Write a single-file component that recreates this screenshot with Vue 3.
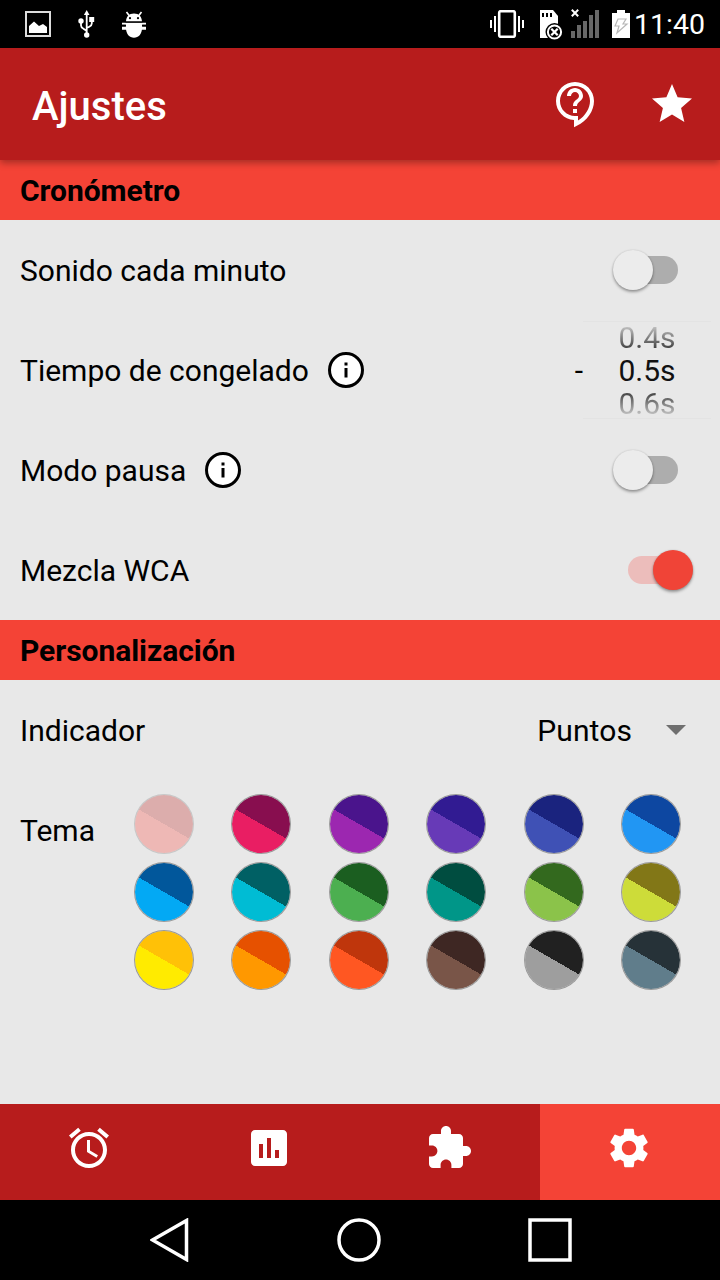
<script setup>
import { ref } from 'vue'

const minuteSound = ref(false)
const pauseMode = ref(false)
const wcaScramble = ref(true)
const activeTab = ref(3)

const themes = [
  ['#eeb8b5', '#dcadac'], ['#e91e63', '#880e4f'], ['#9c27b0', '#4a148c'],
  ['#673ab7', '#311b92'], ['#3f51b5', '#1a237e'], ['#2196f3', '#0d47a1'],
  ['#03a9f4', '#01579b'], ['#00bcd4', '#006064'], ['#4caf50', '#1b5e20'],
  ['#009688', '#004d40'], ['#8bc34a', '#33691e'], ['#cddc39', '#827717'],
  ['#ffeb00', '#ffc107'], ['#ff9800', '#e65100'], ['#ff5722', '#bf360c'],
  ['#795548', '#3e2723'], ['#9e9e9e', '#212121'], ['#607d8b', '#263238'],
]

const tabs = [
  'M22 5.72l-4.6-3.86-1.29 1.53 4.6 3.86L22 5.72zM7.88 3.39L6.6 1.86 2 5.71l1.29 1.53 4.59-3.85zM12.5 8H11v6l4.75 2.85.75-1.23-4-2.37V8zM12 4c-4.97 0-9 4.03-9 9s4.02 9 9 9c4.97 0 9-4.03 9-9s-4.03-9-9-9zm0 16c-3.87 0-7-3.13-7-7s3.13-7 7-7 7 3.13 7 7-3.13 7-7 7z',
  'M19 3H5c-1.1 0-2 .9-2 2v14c0 1.1.9 2 2 2h14c1.1 0 2-.9 2-2V5c0-1.1-.9-2-2-2zM9 17H7v-7h2v7zm4 0h-2V7h2v10zm4 0h-2v-4h2v4z',
  'M20.5 11H19V7c0-1.1-.9-2-2-2h-4V3.5C13 2.12 11.88 1 10.5 1S8 2.12 8 3.5V5H4c-1.1 0-1.99.9-1.99 2v3.8H3.5c1.49 0 2.7 1.21 2.7 2.7s-1.21 2.7-2.7 2.7H2V20c0 1.1.9 2 2 2h3.8v-1.5c0-1.49 1.21-2.7 2.7-2.7 1.49 0 2.7 1.21 2.7 2.7V22H17c1.1 0 2-.9 2-2v-4h1.5c1.38 0 2.5-1.12 2.5-2.5S21.88 11 20.5 11z',
  'M19.14 12.94c.04-.3.06-.61.06-.94 0-.32-.02-.64-.07-.94l2.03-1.58c.18-.14.23-.41.12-.61l-1.92-3.32c-.12-.22-.37-.29-.59-.22l-2.39.96c-.5-.38-1.03-.7-1.62-.94l-.36-2.54c-.04-.24-.24-.41-.48-.41h-3.84c-.24 0-.43.17-.47.41l-.36 2.54c-.59.24-1.13.57-1.62.94l-2.39-.96c-.22-.08-.47 0-.59.22L2.74 8.87c-.12.21-.08.47.12.61l2.03 1.58c-.05.3-.09.63-.09.94s.02.64.07.94l-2.03 1.58c-.18.14-.23.41-.12.61l1.92 3.32c.12.22.37.29.59.22l2.39-.96c.5.38 1.03.7 1.62.94l.36 2.54c.05.24.24.41.48.41h3.84c.24 0 .44-.17.47-.41l.36-2.54c.59-.24 1.13-.56 1.62-.94l2.39.96c.22.08.47 0 .59-.22l1.92-3.32c.12-.22.07-.47-.12-.61l-2.01-1.58zM12 15.6c-1.98 0-3.6-1.62-3.6-3.6s1.62-3.6 3.6-3.6 3.6 1.62 3.6 3.6-1.62 3.6-3.6 3.6z',
]
</script>

<template>
  <div class="screen">
    <div class="status">
      <div class="status-left">
        <!-- picture -->
        <svg width="26" height="26" viewBox="0 0 26 26">
          <rect x="1" y="1" width="24" height="24" fill="none" stroke="#ddd" stroke-width="2" />
          <path d="M4 22v-7l5-4.500 5 4.500 4-2 4 3v6z" fill="#fff" />
        </svg>
        <!-- usb -->
        <svg width="18" height="28" viewBox="0 0 18 28" fill="none" stroke="#fff" stroke-width="1.800">
          <path d="M8.700 4v21M3 12v3.500q0 2 2.500 3.200L8.700 21M13.800 10v3.500q0 2-2.500 3.200L8.700 18" />
          <g fill="#fff" stroke="none">
            <path d="M8.700 0l2.800 5H5.900z" />
            <circle cx="3" cy="11" r="2.700" />
            <path d="M11.200 7h5v5h-5z" />
            <circle cx="8.700" cy="25" r="2.700" />
          </g>
        </svg>
        <!-- debug robot -->
        <svg width="24" height="27" viewBox="0 0 24 27">
          <path d="M4.500 1l3 4M19.500 1l-3 4" stroke="#fff" stroke-width="1.600" />
          <path d="M4 10.500C4.300 5.500 7 2.500 12 2.500s7.700 3 8 8zM4 12.500h16V17c0 6-3.500 9.800-8 9.800S4 23 4 17z" fill="#fff" />
          <path d="M0 11.700h24v2H0zM0 15.500h24v3.200H0z" fill="#fff" />
          <path d="M3.500 10.500h17v1.100h-17zM0 13.700h3.700v1.800H0zM20.300 13.700H24v1.800h-3.700z" fill="#000" />
          <circle cx="8" cy="7.200" r="1.100" fill="#000" />
          <circle cx="16" cy="7.200" r="1.100" fill="#000" />
        </svg>
      </div>
      <div class="status-right">
        <!-- vibrate -->
        <svg class="vibrate" width="34" height="28" viewBox="0 0 34 28">
          <path d="M0 10h2v8H0zM4 6h2v16H4zM28 6h2v16h-2zM32 10h2v8h-2z" fill="#fff" />
          <rect x="9.200" y="1.200" width="15.600" height="25.600" rx="1.500" fill="none" stroke="#fff" stroke-width="2.600" />
        </svg>
        <!-- memory card removed -->
        <svg class="card" width="23" height="30" viewBox="0 0 23 30">
          <path d="M0 0h13l5 6v22H0z" fill="#fff" />
          <path d="M2 3h2v4H2zM6 3h2v4H6zM10 3h2v4h-2z" fill="#000" />
          <circle cx="14.500" cy="22" r="9" fill="#000" />
          <circle cx="14.500" cy="22" r="6.600" fill="#000" stroke="#fff" stroke-width="2" />
          <path d="M11.300 18.800l6.400 6.400M17.700 18.800l-6.400 6.400" stroke="#fff" stroke-width="2.300" />
        </svg>
        <!-- no signal -->
        <svg class="signal" width="29" height="30" viewBox="0 0 29 30">
          <path d="M.8.8l6.400 6.400M7.200.8L.8 7.200" stroke="#fff" stroke-width="2" />
          <path d="M0 22h4v7H0zM6 16h4v13H6zM12 12h4v17h-4zM18 6h4v23h-4zM24 1h4v28h-4z" fill="#686868" />
        </svg>
        <!-- charging battery -->
        <svg class="battery" width="18" height="28" viewBox="0 0 18 28">
          <path d="M5 0h8v3h5v25H0V3h5z" fill="#fff" />
          <path d="M6 9h8l-3 5h4L5 23l2-7H3z" fill="none" stroke="#b8b8b8" stroke-width="1.200" />
        </svg>
        <span class="time">11:40</span>
      </div>
    </div>

    <header class="toolbar">
      <h1>Ajustes</h1>
      <svg class="icon" viewBox="0 0 24 24">
        <path d="M11 23.590v-3.600c-5.010-.26-9-4.420-9-9.490C2 5.260 6.260 1 11.500 1S21 5.260 21 10.500c0 4.950-3.440 9.930-8.570 12.400l-1.430.69zM11.500 3C7.360 3 4 6.360 4 10.500S7.360 18 11.500 18H13v2.300c3.640-2.300 6-6.080 6-9.800C19 6.360 15.640 3 11.500 3zm-1 11.500h2v2h-2zm2-1.500h-2c0-3.250 3-3 3-5 0-1.100-.9-2-2-2s-2 .9-2 2h-2c0-2.210 1.790-4 4-4s4 1.790 4 4c0 2.500-3 2.750-3 5z" />
      </svg>
      <svg class="icon" viewBox="0 0 24 24">
        <path d="M12 17.270L18.180 21l-1.640-7.030L22 9.240l-7.190-.61L12 2 9.190 8.630 2 9.240l5.460 4.730L5.820 21z" />
      </svg>
    </header>

    <main>
      <h2>Cronómetro</h2>
      <div class="row">
        <span class="label">Sonido cada minuto</span>
        <button class="switch" :class="{ on: minuteSound }" @click="minuteSound = !minuteSound"><i></i></button>
      </div>
      <div class="row">
        <span class="label">Tiempo de congelado</span>
        <svg class="info" viewBox="0 0 36 36">
          <circle cx="18" cy="18" r="16.500" />
          <path d="M16.500 10.500h3v3h-3zM16.500 16h3v9.500h-3z" />
        </svg>
        <span class="label dash">-</span>
        <div class="picker"><span>0.4s</span><span>0.5s</span><span>0.6s</span></div>
      </div>
      <div class="row">
        <span class="label">Modo pausa</span>
        <svg class="info" viewBox="0 0 36 36">
          <circle cx="18" cy="18" r="16.500" />
          <path d="M16.500 10.500h3v3h-3zM16.500 16h3v9.500h-3z" />
        </svg>
        <button class="switch" :class="{ on: pauseMode }" @click="pauseMode = !pauseMode"><i></i></button>
      </div>
      <div class="row">
        <span class="label">Mezcla WCA</span>
        <button class="switch" :class="{ on: wcaScramble }" @click="wcaScramble = !wcaScramble"><i></i></button>
      </div>

      <h2>Personalización</h2>
      <div class="row">
        <span class="label">Indicador</span>
        <span class="label value">Puntos</span>
        <svg class="caret" width="20" height="10" viewBox="0 0 20 10"><path d="M0 0h20L10 10z" fill="#6f6f6f" /></svg>
      </div>
      <div class="theme">
        <span class="theme-label">Tema</span>
        <div class="swatches">
          <span
            v-for="(t, i) in themes"
            :key="i"
            class="swatch"
            :class="{ faded: i === 0 }"
            :style="{ '--light': t[0], '--dark': t[1] }"
          ></span>
        </div>
      </div>
    </main>

    <nav class="tabs">
      <button v-for="(d, i) in tabs" :key="i" :class="{ active: i === activeTab }" @click="activeTab = i">
        <svg class="icon" viewBox="0 0 24 24"><path :d="d" /></svg>
      </button>
    </nav>

    <div class="navbar">
      <svg width="40" height="44" viewBox="0 0 40 44"><path d="M2.500 22L36.500 2.500v39z" /></svg>
      <svg width="44" height="44" viewBox="0 0 44 44"><circle cx="22" cy="22" r="20" /></svg>
      <svg width="44" height="44" viewBox="0 0 44 44"><path d="M2 2h40v40H2z" /></svg>
    </div>
  </div>
</template>

<style>
body {
  background: #000;
}
</style>

<style scoped>
.screen {
  width: 720px;
  height: 1280px;
  display: flex;
  flex-direction: column;
  overflow: hidden;
  background: #e8e8e8;
  color: #000;
  font-family: Roboto, "Liberation Sans", sans-serif;
  font-size: 30px;
}
svg {
  display: block;
  flex: none;
}
button {
  border: 0;
  padding: 0;
  background: none;
}
.status {
  height: 48px;
  flex: none;
  display: flex;
  justify-content: space-between;
  background: #000;
}
.status-left {
  display: flex;
  align-items: center;
  padding-left: 25px;
}
.status-left svg:nth-child(2) {
  margin: 0 26px 0 27px;
}
.status-right {
  display: flex;
  align-items: flex-start;
  padding-right: 15px;
}
.vibrate { margin: 10px 16px 0 0; }
.card { margin: 10px 8px 0 0; }
.signal { margin: 9px 12px 0 0; }
.battery { margin: 10px 4px 0 0; }
.time {
  width: 71px;
  line-height: 50px;
  color: #fff;
  font-size: 28.500px;
  white-space: nowrap;
}
.toolbar {
  position: relative;
  z-index: 1;
  height: 112px;
  flex: none;
  box-sizing: border-box;
  display: flex;
  align-items: center;
  gap: 48px;
  padding: 0 24px 0 32px;
  background: #b71c1c;
  box-shadow: 0 3px 7px rgba(0, 0, 0, 0.32);
}
h1 {
  flex: 1;
  margin: 5px 0 0;
  color: #fff;
  font-size: 40px;
  font-weight: 500;
}
.icon {
  width: 48px;
  height: 48px;
  fill: #fff;
}
main {
  flex: 1;
}
h2 {
  height: 60px;
  margin: 0;
  padding-left: 20px;
  line-height: 61px;
  font-size: 30px;
  font-weight: 700;
  letter-spacing: -0.05px;
  background: #f44336;
}
.row {
  height: 100px;
  display: flex;
  align-items: center;
  padding: 0 20px;
  line-height: 36px;
}
.label {
  padding-top: 2px;
}
.info {
  width: 36px;
  height: 36px;
  margin-left: 19px;
}
.info circle {
  fill: #fff;
  stroke: #000;
  stroke-width: 3;
}
.switch {
  display: flex;
  align-items: center;
  width: 50px;
  height: 28px;
  margin-left: auto;
  margin-right: 22px;
  border-radius: 14px;
  background: #adadad;
}
.switch i {
  flex: none;
  width: 40px;
  height: 40px;
  margin-left: -15px;
  border-radius: 50%;
  background: #ececec;
  box-shadow: 0 2px 3px rgba(0, 0, 0, 0.35), 0 0 2px rgba(0, 0, 0, 0.14);
}
.switch.on {
  background: #ecbdbb;
}
.switch.on i {
  margin-left: 25px;
  background: #f04437;
}
.dash {
  margin-left: auto;
}
.picker {
  width: 128px;
  height: 98px;
  box-sizing: border-box;
  margin-right: -11px;
  display: flex;
  flex-direction: column;
  justify-content: center;
  text-align: center;
  border: solid #e3e3e3;
  border-width: 1px 0;
}
.picker span {
  line-height: 33px;
  color: #111;
}
.picker span:first-child {
  color: transparent;
  background: linear-gradient(#e0e0e0, #222) text;
}
.picker span:last-child {
  color: transparent;
  background: linear-gradient(#222, #e0e0e0) text;
}
.value {
  margin-left: auto;
  letter-spacing: 0.1px;
}
.caret {
  margin: 0 14px 0 34px;
}
.theme {
  display: flex;
  padding: 14px 20px 0;
}
.theme-label {
  width: 95.300px;
  flex: none;
  margin-top: 19px;
  line-height: 36px;
}
.swatches {
  flex: 1;
  display: grid;
  grid-template-columns: repeat(6, 1fr);
  justify-items: center;
  row-gap: 8px;
}
.swatch {
  width: 60px;
  height: 60px;
  box-sizing: border-box;
  border: 1px solid rgba(128, 128, 128, 0.75);
  border-radius: 50%;
  background: linear-gradient(30deg, var(--light) 50%, var(--dark) 50%) padding-box;
}
.swatch.faded {
  border-color: rgba(150, 150, 150, 0.4);
}
.tabs {
  height: 96px;
  flex: none;
  display: grid;
  grid-template-columns: repeat(4, 1fr);
  background: #b71c1c;
}
.tabs button {
  display: flex;
  align-items: center;
  justify-content: center;
  padding: 0 2px 8px 0;
}
.tabs .active {
  background: #f44336;
}
.navbar {
  height: 80px;
  flex: none;
  box-sizing: border-box;
  display: flex;
  align-items: center;
  justify-content: space-between;
  padding: 0 148px 0 150px;
  background: #000;
}
.navbar svg {
  fill: none;
  stroke: #fff;
  stroke-width: 3.500;
}
</style>
